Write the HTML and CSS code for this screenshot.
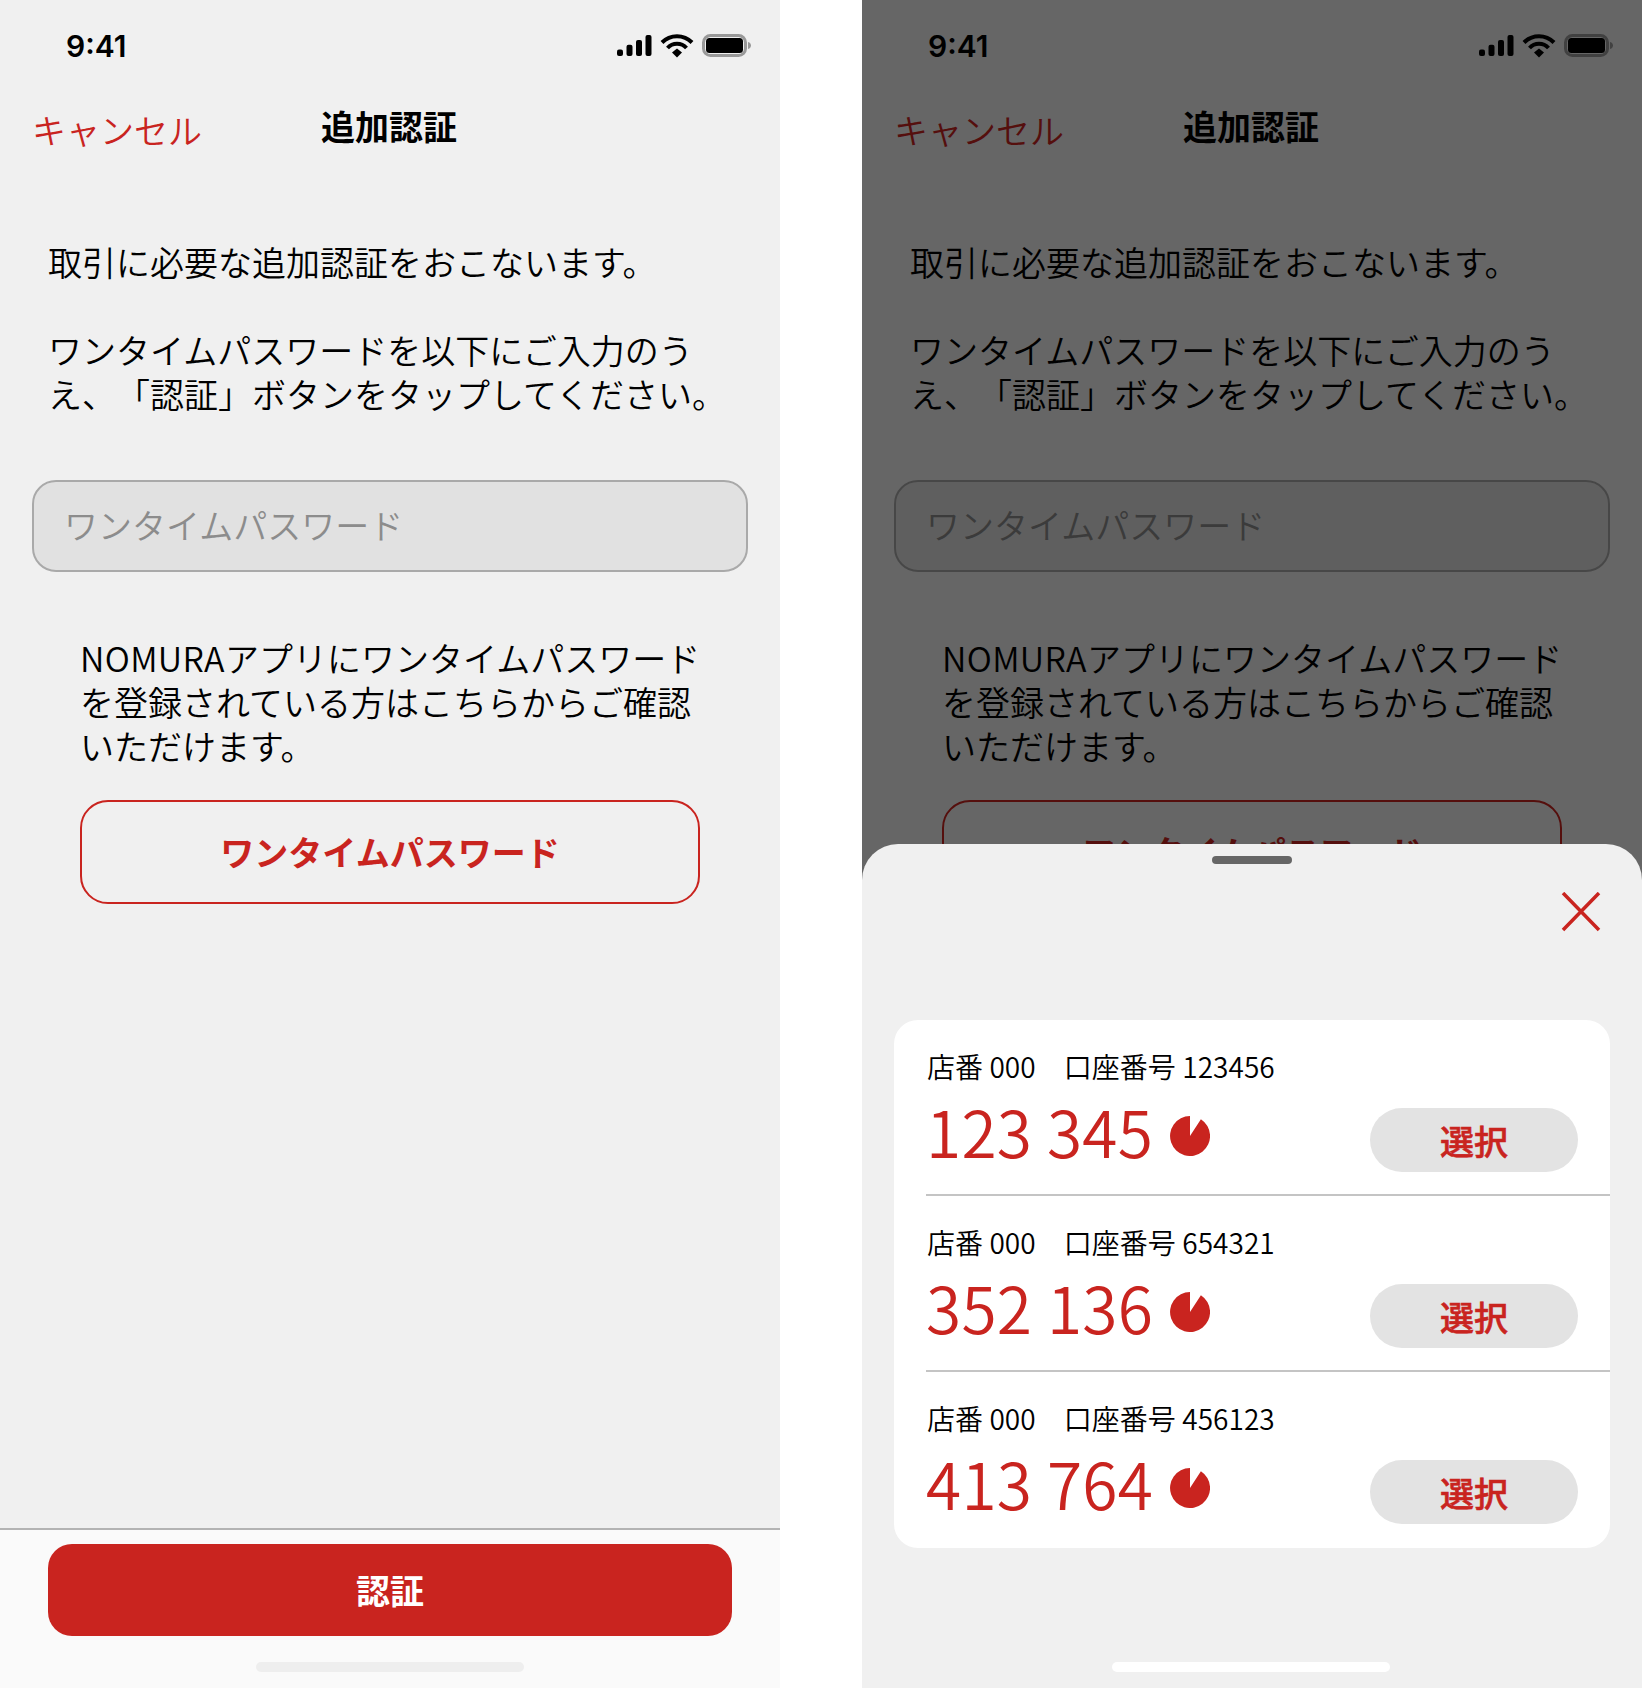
FILE: index.html
```html
<!DOCTYPE html>
<html lang="ja">
<head>
<meta charset="utf-8">
<title>追加認証</title>
<link rel="stylesheet" href="styles.css">
</head>
<body>
<section class="phone">
  <div class="status">
    <span class="time">9:41</span>
    <svg class="status-icons" width="136" height="24" viewBox="0 0 136 24">
      <rect x="1" y="15.5" width="6" height="6.5" rx="2"/><rect x="10.5" y="10.7" width="6" height="11.3" rx="2"/><rect x="20" y="6" width="6" height="16" rx="2"/><rect x="29.5" y="1" width="6" height="21" rx="2"/>
      <path d="M46 8.5a21 21 0 0 1 30 0" fill="none" stroke="#000" stroke-width="4"/><path d="M51.5 14a13 13 0 0 1 19 0" fill="none" stroke="#000" stroke-width="4"/><path d="M56 18.5l5-4 5 4-5 5z"/>
      <rect x="87.5" y="1.5" width="42" height="20" rx="7" fill="none" stroke="#999" stroke-width="3"/><rect x="90" y="4" width="37" height="15" rx="3.5"/><path d="M132 8c2 .4 3 2 3 3.5s-1 3.1-3 3.5z" fill="#999"/>
    </svg>
  </div>
  <header class="nav"><a class="cancel">キャンセル</a><h1 class="title">追加認証</h1><span></span></header>
  <main class="main">
    <p class="lead">取引に必要な追加認証をおこないます。<br><br>ワンタイムパスワードを以下にご入力のう<br>え、「認証」ボタンをタップしてください。</p>
    <div class="field">ワンタイムパスワード</div>
    <p class="note"><span class="latin">NOMURA</span>アプリにワンタイムパスワード<br>を登録されている方はこちらからご確認<br>いただけます。</p>
    <button class="outline">ワンタイムパスワード</button>
  </main>
  <footer class="footer">
    <button class="primary">認証</button>
    <div class="home"></div>
  </footer>
</section>

<section class="phone">
  <div class="status">
    <span class="time">9:41</span>
    <svg class="status-icons" width="136" height="24" viewBox="0 0 136 24">
      <rect x="1" y="15.5" width="6" height="6.5" rx="2"/><rect x="10.5" y="10.7" width="6" height="11.3" rx="2"/><rect x="20" y="6" width="6" height="16" rx="2"/><rect x="29.5" y="1" width="6" height="21" rx="2"/>
      <path d="M46 8.5a21 21 0 0 1 30 0" fill="none" stroke="#000" stroke-width="4"/><path d="M51.5 14a13 13 0 0 1 19 0" fill="none" stroke="#000" stroke-width="4"/><path d="M56 18.5l5-4 5 4-5 5z"/>
      <rect x="87.5" y="1.5" width="42" height="20" rx="7" fill="none" stroke="#999" stroke-width="3"/><rect x="90" y="4" width="37" height="15" rx="3.5"/><path d="M132 8c2 .4 3 2 3 3.5s-1 3.1-3 3.5z" fill="#999"/>
    </svg>
  </div>
  <header class="nav"><a class="cancel">キャンセル</a><h1 class="title">追加認証</h1><span></span></header>
  <main class="main">
    <p class="lead">取引に必要な追加認証をおこないます。<br><br>ワンタイムパスワードを以下にご入力のう<br>え、「認証」ボタンをタップしてください。</p>
    <div class="field">ワンタイムパスワード</div>
    <p class="note"><span class="latin">NOMURA</span>アプリにワンタイムパスワード<br>を登録されている方はこちらからご確認<br>いただけます。</p>
    <button class="outline">ワンタイムパスワード</button>
  </main>
  <footer class="footer">
    <button class="primary">認証</button>
    <div class="home"></div>
  </footer>

  <div class="scrim"></div>
  <div class="sheet">
    <div class="handle"></div>
    <svg class="close" width="40" height="40" viewBox="0 0 40 40"><path d="M2 1l36 37M38 1L2 38" fill="none" stroke="#c9241f" stroke-width="3.5"/></svg>
    <div class="card">
      <div class="row">
        <div class="acct">店番 000　口座番号 123456</div>
        <div class="row-body">
          <div class="code"><span class="digits">123 345</span><svg class="pie" width="40" height="40" viewBox="0 0 40 40"><path d="M20 20V0A20 20 0 1 0 30.9 3.2Z"/></svg></div>
          <button class="pick">選択</button>
        </div>
      </div>
      <div class="row">
        <div class="acct">店番 000　口座番号 654321</div>
        <div class="row-body">
          <div class="code"><span class="digits">352 136</span><svg class="pie" width="40" height="40" viewBox="0 0 40 40"><path d="M20 20V0A20 20 0 1 0 30.9 3.2Z"/></svg></div>
          <button class="pick">選択</button>
        </div>
      </div>
      <div class="row">
        <div class="acct">店番 000　口座番号 456123</div>
        <div class="row-body">
          <div class="code"><span class="digits">413 764</span><svg class="pie" width="40" height="40" viewBox="0 0 40 40"><path d="M20 20V0A20 20 0 1 0 30.9 3.2Z"/></svg></div>
          <button class="pick">選択</button>
        </div>
      </div>
    </div>
    <div class="sheet-home"></div>
  </div>
</section>
</body>
</html>
```
FILE: styles.css
```css
* { box-sizing: border-box; }
html, body { margin: 0; padding: 0; }
body {
  width: 1642px;
  height: 1688px;
  display: flex;
  gap: 82px;
  background: #fff;
  overflow: hidden;
  font-family: "Noto Sans CJK JP", "Noto Sans", sans-serif;
  color: #000;
  text-spacing-trim: space-all;
}
button { font-family: inherit; cursor: pointer; }
.phone {
  position: relative;
  width: 780px;
  height: 1688px;
  display: flex;
  flex-direction: column;
  background: #f0f0f0;
  overflow: hidden;
}
.status {
  height: 90px;
  display: flex;
  justify-content: space-between;
  align-items: flex-start;
  padding: 28px 28px 0 66px;
}
.time { font: 600 30px/36px "Inter", "Liberation Sans", sans-serif; }
.status-icons { margin-top: 6px; }
.nav {
  height: 76px;
  display: grid;
  grid-template-columns: 1fr auto 1fr;
  align-items: center;
}
.cancel { font-size: 34px; font-weight: 350; line-height: 44px; color: #c9241f; padding: 4px 0 0 32px; }
.title { margin: -4px 2px 0 0; font-size: 34px; line-height: 44px; font-weight: 700; }
.main { flex: 1; display: flex; flex-direction: column; }
.lead {
  margin: 74px 0 0 48px;
  font-size: 34px;
  font-weight: 350;
  line-height: 44px;
}
.field {
  margin: 64px 32px 0;
  height: 92px;
  padding: 0 0 3px 30px;
  display: flex;
  align-items: center;
  background: #e1e1e1;
  border: 2px solid #a9a9a9;
  border-radius: 24px;
  font-size: 34px;
  font-weight: 350;
  color: #8c8c8c;
}
.note {
  margin: 64px 0 0 80px;
  font-size: 34px;
  font-weight: 350;
  line-height: 44px;
}
.latin { letter-spacing: .35px; }
.outline {
  margin: 32px 0 0 80px;
  width: 620px;
  height: 104px;
  background: transparent;
  border: 2px solid #c9241f;
  border-radius: 28px;
  padding: 0 0 2px;
  font-size: 34px;
  font-weight: 700;
  color: #c9241f;
}
.footer {
  height: 160px;
  background: #fafafa;
  border-top: 2px solid #b3b3b3;
  display: flex;
  flex-direction: column;
  align-items: center;
}
.primary {
  margin-top: 14px;
  width: 684px;
  height: 92px;
  background: #c9241f;
  border: 0;
  border-radius: 24px;
  padding: 0 0 2px;
  font-size: 34px;
  font-weight: 700;
  color: #fff;
}
.home {
  margin-top: 26px;
  width: 268px;
  height: 10px;
  border-radius: 5px;
  background: #eee;
}
.scrim {
  position: absolute;
  inset: 0;
  background: rgba(0, 0, 0, .575);
}
.sheet {
  position: absolute;
  left: 0;
  right: 0;
  top: 844px;
  bottom: 0;
  display: flex;
  flex-direction: column;
  align-items: center;
  background: #f0f0f0;
  border-radius: 36px 36px 0 0;
}
.handle {
  margin-top: 12px;
  width: 80px;
  height: 8px;
  border-radius: 4px;
  background: #666;
}
.close { margin: 28px 41px 0 0; align-self: flex-end; }
.card {
  margin-top: 88px;
  width: 716px;
  background: #fff;
  border-radius: 24px;
  overflow: hidden;
}
.row {
  height: 176px;
  margin-left: 32px;
  padding-top: 26px;
  border-bottom: 2px solid #c4c4c4;
}
.row:last-child { border-bottom: 0; }
.acct { font-size: 28px; font-weight: 350; line-height: 40px; padding-left: 1px; letter-spacing: .05px; }
.row-body {
  display: flex;
  justify-content: space-between;
  align-items: flex-start;
  padding-right: 32px;
  margin-top: 4px;
}
.code { display: flex; align-items: center; gap: 17px; color: #c9241f; }
.digits { font-size: 64px; font-weight: 350; line-height: 80px; letter-spacing: .3px; }
.pie { fill: #c9241f; margin-top: 12px; }
.pick {
  margin-top: 18px;
  width: 208px;
  height: 64px;
  background: #e3e3e3;
  border: 0;
  border-radius: 32px;
  font-size: 34px;
  font-weight: 500;
  -webkit-text-stroke: .6px #c9241f;
  color: #c9241f;
  padding: 0;
}
.sheet-home {
  margin: auto 2px 16px 0;
  width: 278px;
  height: 10px;
  border-radius: 5px;
  background: #fff;
}
```
